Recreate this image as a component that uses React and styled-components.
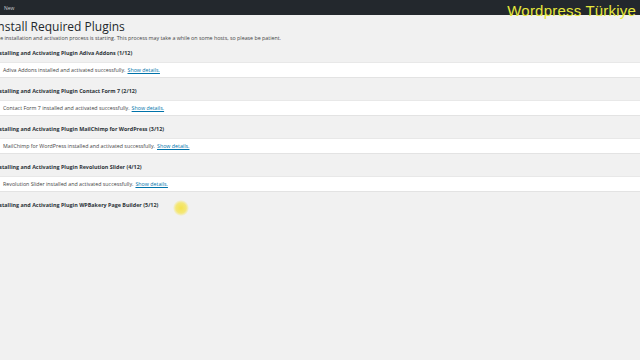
import React from "react";
import styled, { createGlobalStyle } from "styled-components";

const Global = createGlobalStyle`
  html, body { margin: 0; padding: 0; background: #f1f1f1; overflow: hidden; }
  body { width: 640px; height: 360px; font-family: "Open Sans", "Liberation Sans", Arial, sans-serif; }
`;

const Page = styled.div`
  position: relative;
  width: 640px;
  height: 360px;
  background: #f1f1f1;
  overflow: hidden;
`;

const AdminBar = styled.div`
  height: 15px;
  background: #23282d;
  display: flex;
  align-items: center;
  padding-left: 4px;
`;

const BarItem = styled.span`
  color: #c8cdd2;
  font-size: 5px;
  font-family: "Open Sans", "Liberation Sans", Arial, sans-serif;
`;

const Watermark = styled.div`
  position: absolute;
  top: 2px;
  right: 4px;
  color: #e6e83c;
  font-family: "Liberation Sans", Arial, sans-serif;
  font-size: 15px;
  letter-spacing: 0.2px;
  line-height: 18px;
`;

const Content = styled.div`
  margin-left: -6px;
  display: flex;
  flex-direction: column;
`;

const Title = styled.h1`
  margin: 4px 0 0 0;
  font-size: 12px;
  font-weight: 400;
  color: #23282d;
  line-height: 15px;
  font-family: "Open Sans", "Liberation Sans", Arial, sans-serif;
`;

const Intro = styled.p`
  margin: 0;
  font-size: 5.3px;
  color: #444;
  line-height: 8px;
`;

const StepHeading = styled.h2`
  margin: ${(p) => (p.$first ? "7px" : "9px")} 0 0 0;
  font-size: 5.4px;
  font-weight: 700;
  color: #2c3338;
  line-height: 8px;
`;

const Notice = styled.div`
  margin: 5px 0 0 0;
  height: 14px;
  background: #ffffff;
  border-top: 1px solid #e8e8e8;
  border-bottom: 1px solid #e3e3e3;
  display: flex;
  align-items: center;
  padding-left: 9px;
  font-size: 5.3px;
  color: #444;
  width: 700px;
`;

const Link = styled.a`
  color: #0073aa;
  text-decoration: underline;
  margin-left: 2px;
`;

const Cursor = styled.div`
  position: absolute;
  left: 173px;
  top: 200px;
  width: 16px;
  height: 16px;
  border-radius: 50%;
  background: radial-gradient(circle, rgba(245, 225, 60, 0.9) 0%, rgba(245, 228, 80, 0.75) 45%, rgba(245, 230, 100, 0) 72%);
`;

const steps = [
  { name: "Adiva Addons", n: 1 },
  { name: "Contact Form 7", n: 2 },
  { name: "MailChimp for WordPress", n: 3 },
  { name: "Revolution Slider", n: 4 },
  { name: "WPBakery Page Builder", n: 5, pending: true },
];

export default function App() {
  return (
    <Page>
      <Global />
      <AdminBar>
        <BarItem>New</BarItem>
      </AdminBar>
      <Watermark>Wordpress Türkiye</Watermark>
      <Content>
        <Title>Install Required Plugins</Title>
        <Intro>
          The installation and activation process is starting. This process may take a while on some hosts, so please be patient.
        </Intro>
        {steps.map((s, i) => (
          <React.Fragment key={s.n}>
            <StepHeading $first={i === 0}>
              Installing and Activating Plugin {s.name} ({s.n}/12)
            </StepHeading>
            {!s.pending && (
              <Notice>
                {s.name} installed and activated successfully.
                <Link href="#">Show details.</Link>
              </Notice>
            )}
          </React.Fragment>
        ))}
      </Content>
      <Cursor />
    </Page>
  );
}
